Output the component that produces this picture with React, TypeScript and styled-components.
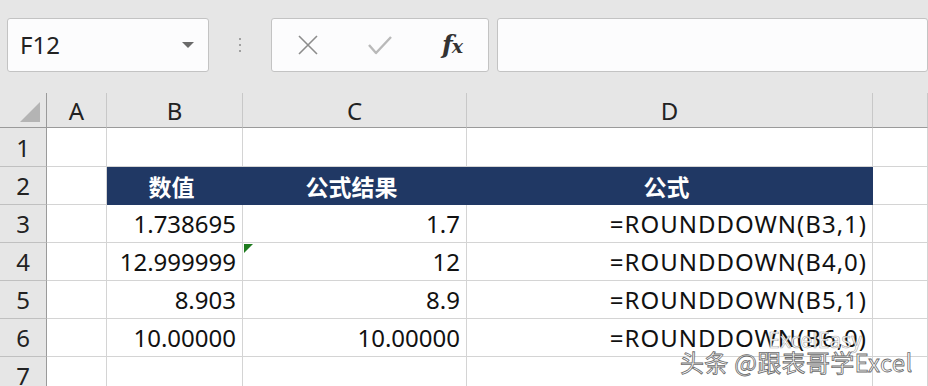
import React from "react";
import styled, { createGlobalStyle } from "styled-components";

const Global = createGlobalStyle`
  html, body { margin: 0; padding: 0; background: #e6e6e6; }
  body { font-family: "Noto Sans", "Noto Sans CJK SC", sans-serif; overflow: hidden; }
`;

const Page = styled.div`
  position: relative;
  width: 928px;
  height: 386px;
  overflow: hidden;
  background: #e6e6e6;
`;

const Toolbar = styled.div`
  display: flex;
  align-items: center;
  height: 93px;
  padding: 0 0 4px 7px;
  box-sizing: border-box;
`;

const Box = styled.div<{ $w: string; $ml?: number }>`
  box-sizing: border-box;
  height: 54px;
  width: ${(p) => p.$w};
  flex: ${(p) => (p.$w === "auto" ? "1 1 auto" : "0 0 " + p.$w)};
  margin-left: ${(p) => p.$ml ?? 0}px;
  background: #fcfcfd;
  border: 1px solid #c3c3c3;
  border-radius: 3px;
  display: flex;
  align-items: center;
`;

const NameText = styled.span`
  font-size: 24px;
  color: #222;
  margin-left: 12px;
  flex: 1;
`;

const Caret = styled.span`
  width: 0;
  height: 0;
  border-left: 6px solid transparent;
  border-right: 6px solid transparent;
  border-top: 6px solid #6a6a6a;
  margin-right: 14px;
`;

const Dots = styled.div`
  flex: 0 0 62px;
  display: flex;
  flex-direction: column;
  align-items: center;
  gap: 4px;
  span {
    width: 2px;
    height: 2px;
    background: #8a8a8a;
    border-radius: 1px;
  }
`;

const IconRow = styled.div`
  display: grid;
  grid-template-columns: 72px 72px 72px;
  width: 100%;
  align-items: center;
  justify-items: center;
`;

const Fx = styled.span`
  font-family: "DejaVu Serif", "Liberation Serif", serif;
  font-style: italic;
  font-weight: bold;
  font-size: 25px;
  color: #333;
  letter-spacing: -1px;
  span {
    font-size: 19px;
  }
`;

const Grid = styled.div`
  display: grid;
  grid-template-columns: 47px 60px 136px 224px 406px 1fr;
  grid-template-rows: 35px 39px 38px 38px 38px 38px 38px 38px;
  background: #fff;
`;

const ColHead = styled.div<{ $corner?: boolean }>`
  background: #e6e6e6;
  border-bottom: 1px solid #9a9a9a;
  border-right: 1px solid ${(p) => (p.$corner ? "#9a9a9a" : "#c8c8c8")};
  font-size: 24px;
  color: #222;
  display: flex;
  align-items: center;
  justify-content: center;
  position: relative;
`;

const CornerTri = styled.div`
  position: absolute;
  right: 6px;
  bottom: 5px;
  width: 0;
  height: 0;
  border-left: 20px solid transparent;
  border-bottom: 20px solid #b4b4b4;
`;

const RowHead = styled.div`
  background: #e6e6e6;
  border-right: 1px solid #9a9a9a;
  border-bottom: 1px solid #c0c0c0;
  font-size: 24px;
  color: #222;
  display: flex;
  align-items: center;
  justify-content: center;
`;

const Cell = styled.div<{ $align?: "left" | "right" | "center"; $head?: boolean; $wide?: boolean }>`
  position: relative;
  box-sizing: border-box;
  border-right: 1px solid ${(p) => (p.$head ? "#203864" : "#d4d4d4")};
  border-bottom: 1px solid ${(p) => (p.$head ? "#203864" : "#d4d4d4")};
  background: ${(p) => (p.$head ? "#203864" : "#fff")};
  color: ${(p) => (p.$head ? "#fff" : "#111")};
  font-size: ${(p) => (p.$head ? "23px" : "24px")};
  font-weight: ${(p) => (p.$head ? 700 : 400)};
  letter-spacing: ${(p) => (p.$wide ? "1px" : "0")};
  display: flex;
  align-items: center;
  justify-content: ${(p) =>
    p.$align === "right" ? "flex-end" : p.$align === "center" ? "center" : "flex-start"};
  padding: 0 ${(p) => (p.$wide ? "5px" : "6px")} 0 0;
  white-space: nowrap;
`;

const ErrTri = styled.div`
  position: absolute;
  left: 1px;
  top: 1px;
  width: 0;
  height: 0;
  border-top: 9px solid #1e7b1e;
  border-right: 9px solid transparent;
`;

const Watermark = styled.div`
  position: absolute;
  left: 680px;
  top: 344px;
  font-family: "Noto Sans CJK SC", "Noto Sans", sans-serif;
  font-size: 24px;
  color: #fff;
  -webkit-text-stroke: 0.8px #6a6a6a;
  letter-spacing: 0.3px;
  white-space: nowrap;
`;

const Faint = styled.div`
  position: absolute;
  left: 768px;
  top: 326px;
  font-family: "Noto Sans", sans-serif;
  font-size: 21px;
  color: rgba(255, 255, 255, 0.9);
  -webkit-text-stroke: 0.6px rgba(90, 90, 90, 0.55);
  white-space: nowrap;
`;

const cols = ["A", "B", "C", "D", ""];

const data: [string, string, string][] = [
  ["1.738695", "1.7", "=ROUNDDOWN(B3,1)"],
  ["12.999999", "12", "=ROUNDDOWN(B4,0)"],
  ["8.903", "8.9", "=ROUNDDOWN(B5,1)"],
  ["10.00000", "10.00000", "=ROUNDDOWN(B6,0)"],
];

export default function App() {
  return (
    <Page>
      <Global />
      <Toolbar>
        <Box $w="202px">
          <NameText>F12</NameText>
          <Caret />
        </Box>
        <Dots>
          <span />
          <span />
          <span />
        </Dots>
        <Box $w="218px">
          <IconRow>
            <svg width="22" height="22" viewBox="0 0 22 22">
              <path d="M2 2 L20 20 M20 2 L2 20" stroke="#8c8c8c" strokeWidth="1.6" fill="none" />
            </svg>
            <svg width="26" height="22" viewBox="0 0 26 22">
              <path d="M2 11 L9 19 L24 3" stroke="#b9b9b9" strokeWidth="2.4" fill="none" strokeLinejoin="round" />
            </svg>
            <Fx>
              f<span>x</span>
            </Fx>
          </IconRow>
        </Box>
        <Box $w="auto" $ml={8} />
      </Toolbar>
      <Grid>
        <ColHead $corner>
          <CornerTri />
        </ColHead>
        {cols.map((c, i) => (
          <ColHead key={i}>{c}</ColHead>
        ))}

        <RowHead>1</RowHead>
        <Cell />
        <Cell />
        <Cell />
        <Cell />
        <Cell />

        <RowHead>2</RowHead>
        <Cell />
        <Cell $head $align="center">数值</Cell>
        <Cell $head $align="center">公式结果</Cell>
        <Cell $head $align="center">公式</Cell>
        <Cell />

        {data.map((r, i) => (
          <React.Fragment key={i}>
            <RowHead>{i + 3}</RowHead>
            <Cell />
            <Cell $align="right">{r[0]}</Cell>
            <Cell $align="right">
              {i === 1 && <ErrTri />}
              {r[1]}
            </Cell>
            <Cell $align="right" $wide>
              {r[2]}
            </Cell>
            <Cell />
          </React.Fragment>
        ))}

        <RowHead>7</RowHead>
        <Cell />
        <Cell />
        <Cell />
        <Cell />
        <Cell />
      </Grid>
      <Faint>ExcelEasy</Faint>
      <Watermark>头条 @跟表哥学Excel</Watermark>
    </Page>
  );
}
